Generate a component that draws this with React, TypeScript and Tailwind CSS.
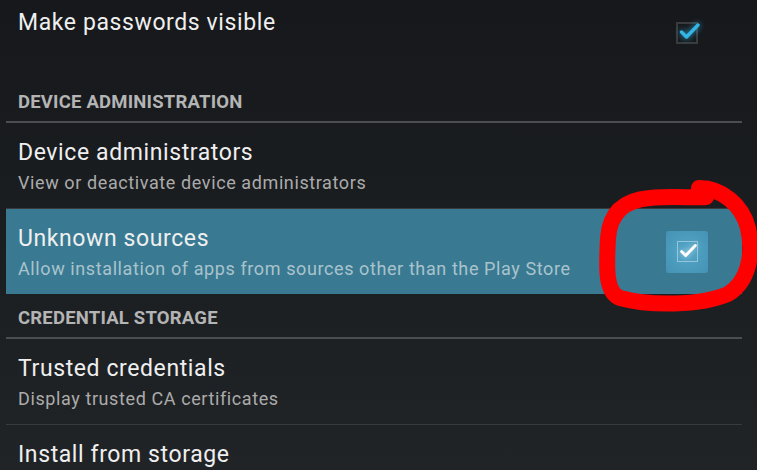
const sections = [
  {
    header: "DEVICE ADMINISTRATION",
    items: [
      {
        title: "Device administrators",
        summary: "View or deactivate device administrators",
      },
      {
        title: "Unknown sources",
        summary: "Allow installation of apps from sources other than the Play Store",
        checked: true,
        pressed: true,
      },
    ],
  },
  {
    header: "CREDENTIAL STORAGE",
    items: [
      {
        title: "Trusted credentials",
        summary: "Display trusted CA certificates",
      },
      {
        title: "Install from storage",
        summary: "Install certificates from storage",
      },
    ],
  },
];

function HoloCheck({ pressed }: { pressed?: boolean }) {
  if (pressed) {
    return (
      <div className="flex h-[42px] w-[42px] items-center justify-center rounded-[3px] bg-[radial-gradient(circle,#52a6c8_0%,#4592b4_100%)]">
        <div className="relative h-[21px] w-[21px] border border-white/40">
          <svg viewBox="0 0 24 24" className="absolute -right-[2px] -top-[2px] h-[22px] w-[22px] drop-shadow-[0_0_3px_rgba(255,255,255,0.6)]">
            <path d="M5 12.5l4.5 4.5L20 6" fill="none" stroke="#ffffff" strokeWidth="3.2" strokeLinecap="round" strokeLinejoin="round" />
          </svg>
        </div>
      </div>
    );
  }
  return (
    <div className="flex h-[42px] w-[42px] items-center justify-center">
      <div className="relative h-[22px] w-[22px] border-2 border-[#3a3b3d]">
        <svg viewBox="0 0 24 24" className="absolute -right-[5px] -top-[5px] h-[24px] w-[24px] drop-shadow-[0_0_3px_rgba(51,181,229,0.9)]">
          <path d="M4.5 13l5 5L21 6" fill="none" stroke="#33b5e5" strokeWidth="3.4" strokeLinecap="round" strokeLinejoin="round" />
        </svg>
      </div>
    </div>
  );
}

export default function App() {
  return (
    <main className="relative h-[470px] w-[757px] overflow-hidden bg-[linear-gradient(to_bottom,#16181b_0%,#1b1e21_50%,#212427_100%)] font-['Roboto',sans-serif]">
      <div className="flex w-[736px] flex-col pl-[6px] box-content">
        {/* row scrolled partly above the top edge */}
        <div className="-mt-[8px] flex h-[86px] items-center justify-between pl-[12px] pr-[34px]">
          <div className="self-start pt-[16px] text-[23px] leading-[30px] tracking-[0.6px] text-[#efefef]">
            Make passwords visible
          </div>
          <div className="mt-[-4px]">
            <HoloCheck />
          </div>
        </div>

        {sections.map((section) => (
          <section key={section.header} className="flex flex-col">
            <div className="flex h-[43px] items-center pl-[12px] pt-[4px] text-[18.5px] font-bold leading-[22px] tracking-[0.2px] text-[#b4b4b4]">
              {section.header}
            </div>
            <div className="h-[2px] bg-[#4b4d50]" />
            {section.items.map((item, i) => (
              <div key={item.title} className="flex flex-col">
                <div
                  className={`flex h-[85px] items-center justify-between pl-[12px] pr-[34px] ${
                    item.pressed ? "bg-[#397a92]" : ""
                  }`}
                >
                  <div className="flex flex-col self-start pt-[15px]">
                    <span className="text-[23px] leading-[30px] tracking-[0.6px] text-[#efefef]">{item.title}</span>
                    <span
                      className={`mt-[4px] text-[18px] leading-[22px] tracking-[0.6px] ${
                        item.pressed ? "text-[#a9c3cd]" : "text-[#ababab]"
                      }`}
                    >
                      {item.summary}
                    </span>
                  </div>
                  {item.checked && <HoloCheck pressed={item.pressed} />}
                </div>
                {i < section.items.length - 1 && !item.pressed && (
                  <div className="h-[1px] bg-[#383b3e]" />
                )}
              </div>
            ))}
          </section>
        ))}
      </div>

      {/* red hand-drawn annotation */}
      <svg className="pointer-events-none absolute left-0 top-0" width="757" height="470" viewBox="0 0 757 470">
        <path
          d="M699 188 C 722 188, 742 205, 748 228 C 754 255, 748 282, 728 294 C 700 306, 650 306, 620 298 C 604 292, 607 262, 608 238 C 610 212, 625 200, 650 198 C 672 196, 694 198, 706 197"
          fill="none"
          stroke="#ff0000"
          strokeWidth="16"
          strokeLinecap="round"
          strokeLinejoin="round"
        />
      </svg>
    </main>
  );
}
